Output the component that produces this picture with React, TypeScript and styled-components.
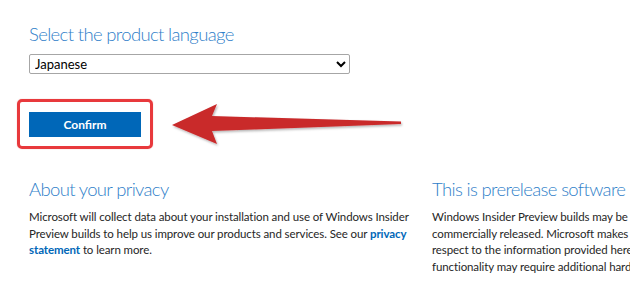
import styled, { createGlobalStyle } from "styled-components";

const GlobalStyle = createGlobalStyle`
  html, body {
    margin: 0;
    padding: 0;
    background: #fff;
    overflow: hidden;
  }
  body {
    font-family: "Segoe UI", Lato, "Liberation Sans", sans-serif;
    color: #262626;
  }
`;

export default function App() {
  return (
    <>
      <GlobalStyle />
      <Page>
        <LanguageSection>
          <Heading>Select the product language</Heading>
          <LanguageSelect defaultValue="ja">
            <option value="ja">Japanese</option>
          </LanguageSelect>
        </LanguageSection>

        <ConfirmRow>
          <Highlight>
            <ConfirmButton>Confirm</ConfirmButton>
          </Highlight>
          <Arrow width="240" height="50" viewBox="0 0 240 50">
            <defs>
              <filter id="shadow" x="-10%" y="-30%" width="120%" height="160%">
                <feDropShadow dx="1" dy="1.5" stdDeviation="1.2" floodColor="#000" floodOpacity="0.3" />
              </filter>
            </defs>
            <path
              d="M1 21 L46 0 L41 12 L230 17.5 L230 20 L41 27 L46 40 Z"
              fill="#c92a2c"
              filter="url(#shadow)"
            />
          </Arrow>
        </ConfirmRow>

        <InfoColumns>
          <InfoBlock>
            <Heading>About your privacy</Heading>
            <Body>
              Microsoft will collect data about your installation and use of Windows Insider
              <br />
              Preview builds to help us improve our products and services. See our{" "}
              <Link href="#">privacy</Link>
              <br />
              <Link href="#">statement</Link> to learn more.
            </Body>
          </InfoBlock>
          <InfoBlock>
            <Heading>This is prerelease software</Heading>
            <Body>
              Windows Insider Preview builds may be substantially modified before they are
              <br />
              commercially released. Microsoft makes no warranties, express or implied, with
              <br />
              respect to the information provided here. Some product features and
              <br />
              functionality may require additional hardware or software.
            </Body>
          </InfoBlock>
        </InfoColumns>
      </Page>
    </>
  );
}

const Page = styled.div`
  width: 630px;
  height: 302px;
  overflow: hidden;
  padding: 21px 0 0 29px;
  box-sizing: border-box;
`;

const LanguageSection = styled.section`
  display: flex;
  flex-direction: column;
  gap: 7px;
`;

const Heading = styled.h2`
  margin: 0;
  font-family: "Segoe UI", Lato, sans-serif;
  font-weight: 300;
  font-size: 18.5px;
  letter-spacing: -0.65px;
  line-height: 26px;
  color: #2f80c9;
  white-space: nowrap;
`;

const LanguageSelect = styled.select`
  width: 321px;
  height: 20px;
  font-family: "Segoe UI", Lato, sans-serif;
  font-size: 13px;
  color: #000;
  border: 1px solid #a6a6a6;
  border-radius: 2px;
  background: #fff;
  padding: 0 1px;
`;

const ConfirmRow = styled.div`
  position: relative;
  margin: 25px 0 0 -12px;
  height: 50px;
`;

const Highlight = styled.div`
  display: inline-block;
  border: 3px solid #e8393c;
  border-radius: 5px;
  padding: 10px 9px 9px 9px;
  box-shadow: 0 0 1px rgba(200, 40, 40, 0.5);
`;

const ConfirmButton = styled.button`
  display: block;
  width: 112px;
  height: 25px;
  border: none;
  background: #0067b8;
  color: #fff;
  font-family: "Segoe UI", Lato, sans-serif;
  font-weight: 700;
  font-size: 12px;
  cursor: pointer;
`;

const Arrow = styled.svg`
  position: absolute;
  left: 154px;
  top: 5px;
`;

const InfoColumns = styled.div`
  display: grid;
  grid-template-columns: 370px 370px;
  column-gap: 33px;
  margin-top: 27px;
`;

const InfoBlock = styled.div`
  display: flex;
  flex-direction: column;
  gap: 7px;
`;

const Body = styled.p`
  margin: 0;
  font-size: 11.5px;
  letter-spacing: -0.1px;
  line-height: 16.5px;
  color: #262626;
  white-space: nowrap;
`;

const Link = styled.a`
  color: #0067b8;
  font-weight: 700;
  text-decoration: none;
`;
